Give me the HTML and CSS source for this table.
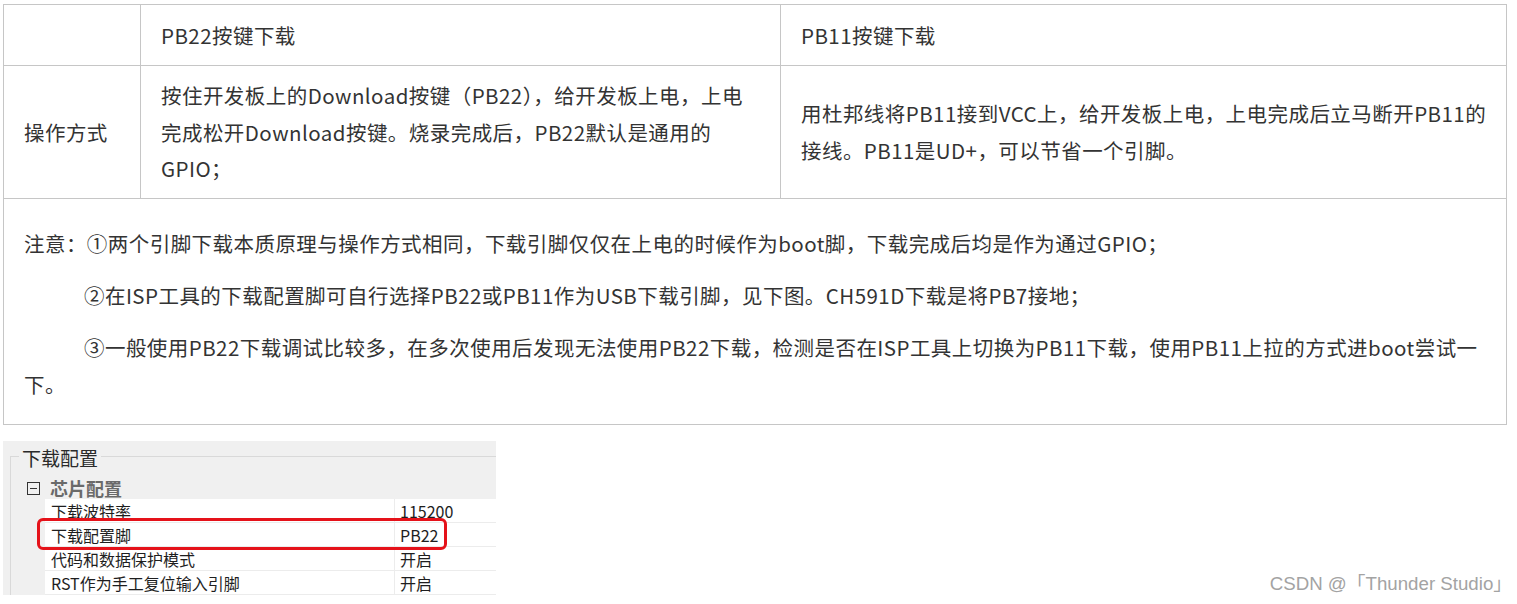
FILE: index.html
```html
<!DOCTYPE html>
<html lang="zh-CN">
  <head>
    <meta charset="UTF-8" />
    <meta name="viewport" content="width=device-width, initial-scale=1.0" />
    <title>PB22 / PB11 下载方式</title>
    <link rel="stylesheet" href="styles.css">
  </head>
  <body>
    <div class="page">
      <table class="pin-table">
        <colgroup>
          <col class="col-label" />
          <col class="col-pb22" />
          <col class="col-pb11" />
        </colgroup>
        <tr class="head-row">
          <td></td>
          <td>PB22按键下载</td>
          <td class="last">PB11按键下载</td>
        </tr>
        <tr class="body-row">
          <td>操作方式</td>
          <td>按住开发板上的Download按键（PB22），给开发板上电，上电完成松开Download按键。烧录完成后，PB22默认是通用的GPIO；</td>
          <td class="last">用杜邦线将PB11接到VCC上，给开发板上电，上电完成后立马断开PB11的接线。PB11是UD+，可以节省一个引脚。</td>
        </tr>
        <tr>
          <td colspan="3" class="notes">
            <p>注意：①两个引脚下载本质原理与操作方式相同，下载引脚仅仅在上电的时候作为boot脚，下载完成后均是作为通过GPIO；</p>
            <p class="indent">②在ISP工具的下载配置脚可自行选择PB22或PB11作为USB下载引脚，见下图。CH591D下载是将PB7接地；</p>
            <p class="indent">③一般使用PB22下载调试比较多，在多次使用后发现无法使用PB22下载，检测是否在ISP工具上切换为PB11下载，使用PB11上拉的方式进boot尝试一下。</p>
          </td>
        </tr>
      </table>

      <div class="shot-row">
        <div class="isp-shot">
          <fieldset class="group">
            <legend>下载配置</legend>
            <div class="tree-head">
              <span class="collapse-box"></span>
              <span class="tree-title">芯片配置</span>
            </div>
            <div class="prop-grid">
              <div class="prop-row"><span class="prop-name">下载波特率</span><span class="prop-value">115200</span></div>
              <div class="prop-row"><span class="prop-name">下载配置脚</span><span class="prop-value">PB22</span></div>
              <div class="prop-row"><span class="prop-name">代码和数据保护模式</span><span class="prop-value">开启</span></div>
              <div class="prop-row"><span class="prop-name">RST作为手工复位输入引脚</span><span class="prop-value">开启</span></div>
              <div class="mark-box"></div>
            </div>
          </fieldset>
        </div>
        <div class="watermark">CSDN @「Thunder Studio」</div>
      </div>
    </div>
  </body>
</html>
```

FILE: styles.css
```css
* {
  margin: 0;
  padding: 0;
  box-sizing: border-box;
}

body {
  font-family: "Noto Sans CJK SC", "Noto Sans", sans-serif;
  background-color: #fff;
  color: #333;
}

.page {
  padding: 4px 0 0 3px;
  width: 1506px;
}

/* article table */
.pin-table {
  border-collapse: collapse;
  table-layout: fixed;
  width: 1503px;
  font-size: 20.5px;
  line-height: 36.5px;
  letter-spacing: 0.45px;
}

.col-label {
  width: 137px;
}

.col-pb22 {
  width: 640px;
}

.col-pb11 {
  width: 726px;
}

.pin-table td {
  border: 1px solid #c6c6c6;
  padding: 11.5px 20px;
  vertical-align: middle;
}

.pin-table td.last {
  padding-right: 10px;
}

.notes {
  padding: 26px 20px 22px !important;
}

.notes p + p {
  margin-top: 15.5px;
}

.notes .indent {
  text-indent: 60px;
}

/* screenshot of the ISP tool */
.shot-row {
  display: flex;
  justify-content: space-between;
  align-items: flex-end;
  margin-top: 16px;
}

.isp-shot {
  width: 493px;
  height: 154px;
  background-color: #f0f0f0;
  overflow: hidden;
  color: #1e1e1e;
}

.group {
  width: 620px;
  margin: 1px 0 0 7px;
  border: none;
  border-top: 1px solid #d9d9d9;
  border-left: 1px solid #d9d9d9;
  padding: 0;
}

.group legend {
  margin-left: 8px;
  padding: 4px 3px 0;
  font-size: 19px;
  line-height: 24px;
  color: #2a2a2a;
}

.tree-head {
  display: flex;
  align-items: center;
  height: 22px;
  margin: 7px 0 0 16px;
}

.collapse-box {
  position: relative;
  width: 13px;
  height: 13px;
  border: 1px solid #333;
}

.collapse-box::after {
  content: "";
  position: absolute;
  left: 2px;
  right: 2px;
  top: 5px;
  height: 1px;
  background: #333;
}

.tree-title {
  margin-left: 10px;
  font-size: 18px;
  font-weight: 700;
  color: #6a6a6a;
}

.prop-grid {
  position: relative;
  margin-left: 34px;
  background-color: #fff;
}

.prop-row {
  display: flex;
  height: 24px;
  align-items: center;
  font-size: 16px;
  border-bottom: 1px solid #ececec;
}

.prop-name {
  width: 350px;
  padding-left: 6px;
  height: 100%;
  display: flex;
  align-items: center;
  border-right: 1px solid #ececec;
}

.prop-value {
  padding-left: 5px;
}

.mark-box {
  position: absolute;
  left: -8px;
  top: 19px;
  width: 410px;
  height: 32px;
  border: 3px solid #e5121a;
  border-radius: 6px;
}

.watermark {
  margin-right: -6px;
  font-family: "Liberation Sans", "Noto Sans CJK SC", sans-serif;
  font-size: 18.7px;
  line-height: 22px;
  color: #a3a3a3;
  text-shadow: 1px 1px 0 #fff;
}
```
